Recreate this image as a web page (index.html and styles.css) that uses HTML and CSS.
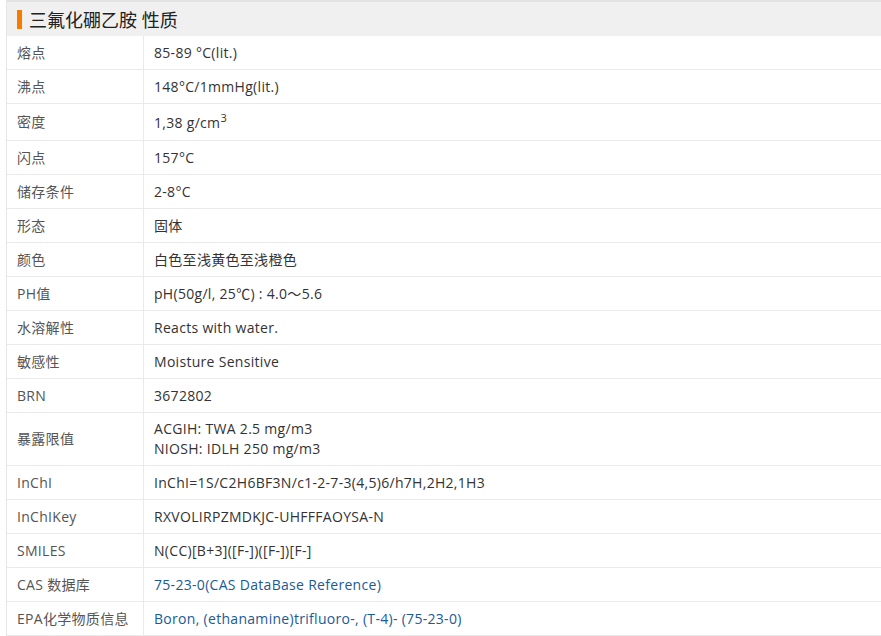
FILE: index.html
```html
<!DOCTYPE html>
<html lang="zh-CN">
<head>
    <meta charset="UTF-8">
    <title>三氟化硼乙胺 性质</title>
    <link rel="stylesheet" href="styles.css">
</head>
<body>
    <div class="panel">
        <h2 class="panel-title"><span class="bar"></span>三氟化硼乙胺 性质</h2>
        <table class="props">
            <tr><th>熔点</th><td>85-89 °C(lit.)</td></tr>
            <tr><th>沸点</th><td>148°C/1mmHg(lit.)</td></tr>
            <tr class="tall"><th>密度</th><td>1,38 g/cm<sup>3</sup></td></tr>
            <tr><th>闪点</th><td>157°C</td></tr>
            <tr><th>储存条件</th><td>2-8°C</td></tr>
            <tr><th>形态</th><td>固体</td></tr>
            <tr><th>颜色</th><td>白色至浅黄色至浅橙色</td></tr>
            <tr><th>PH值</th><td>pH(50g/l, 25℃) : 4.0～5.6</td></tr>
            <tr><th>水溶解性</th><td>Reacts with water.</td></tr>
            <tr><th>敏感性</th><td>Moisture Sensitive</td></tr>
            <tr><th>BRN</th><td>3672802</td></tr>
            <tr><th>暴露限值</th><td>ACGIH: TWA 2.5 mg/m3<br>NIOSH: IDLH 250 mg/m3</td></tr>
            <tr><th>InChI</th><td>InChI=1S/C2H6BF3N/c1-2-7-3(4,5)6/h7H,2H2,1H3</td></tr>
            <tr><th>InChIKey</th><td>RXVOLIRPZMDKJC-UHFFFAOYSA-N</td></tr>
            <tr><th>SMILES</th><td>N(CC)[B+3]([F-])([F-])[F-]</td></tr>
            <tr><th>CAS 数据库</th><td><a href="#" class="link">75-23-0(CAS DataBase Reference)</a></td></tr>
            <tr><th>EPA化学物质信息</th><td><a href="#" class="link">Boron, (ethanamine)trifluoro-, (T-4)- (75-23-0)</a></td></tr>
        </table>
    </div>
</body>
</html>
```

FILE: styles.css
```css
body {
    margin: 0;
    padding: 0 0 0 6px;
    font-family: "Open Sans", "Noto Sans CJK SC", sans-serif;
    font-size: 14px;
    color: #333;
    background: #fff;
}

.panel {
    border-left: 1px solid #e6e6e6;
}

.panel-title {
    margin: 0;
    height: 34px;
    border-top: 2px solid #e2e2e2;
    background-color: #f0f0f0;
    display: flex;
    align-items: center;
    padding-left: 10px;
    font-size: 18px;
    font-weight: normal;
    color: #222;
}

.bar {
    width: 5px;
    height: 19px;
    background-color: #f57c00;
    margin-right: 7px;
}

.props {
    width: 100%;
    border-collapse: collapse;
}

.props th,
.props td {
    border-bottom: 1px solid #eaeaea;
    padding: 6px 10px;
    height: 21px;
    line-height: 20px;
    text-align: left;
    font-weight: normal;
    letter-spacing: 0.3px;
}

.props th {
    width: 116px;
    color: #555;
    border-right: 1px solid #eaeaea;
}

.props .tall td {
    height: 22px;
    padding-top: 8px;
    padding-bottom: 6px;
}

.props sup {
    font-size: 11px;
    line-height: 0;
}

.link {
    color: #1b5a96;
    text-decoration: none;
}
```
